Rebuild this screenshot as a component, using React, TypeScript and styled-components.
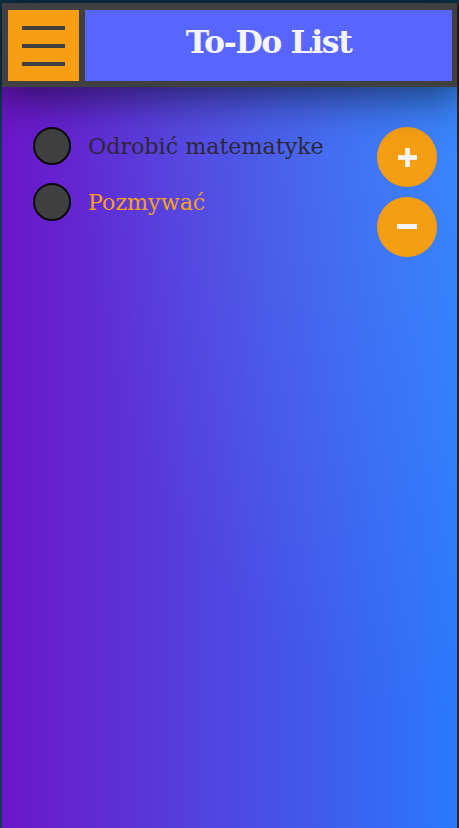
import styled, { createGlobalStyle } from "styled-components";

const Global = createGlobalStyle`
html, body {
  margin: 0;
  padding: 0;
  height: 100%;
}
body {
  background: #0f3a55;
  font-family: "DejaVu Serif", "Liberation Serif", serif;
}
#root {
  height: 100%;
}
`

const Page = styled.div`
  box-sizing: border-box;
  height: 100vh;
  padding: 3px 0 0 2px;
  display: flex;
  flex-direction: column;
`

const Frame = styled.div`
  flex: 1;
  display: flex;
  flex-direction: column;
  border-right: 2px solid #25282c;
`

const Header = styled.header`
  position: relative;
  z-index: 2;
  height: 84px;
  box-sizing: border-box;
  padding: 7px 5px 6px 6px;
  background: #404040;
  display: flex;
  gap: 6px;
  box-shadow: 0 0 45px 8px rgba(0, 0, 0, 0.6);
`

const MenuButton = styled.button`
  width: 71px;
  height: 71px;
  border: none;
  padding: 0;
  background: #f79e13;
  display: flex;
  flex-direction: column;
  align-items: center;
  justify-content: center;
  gap: 14px;
  cursor: pointer;
`

const Bar = styled.span`
  display: block;
  width: 43px;
  height: 4px;
  background: #404040;
`

const Title = styled.h1`
  flex: 1;
  margin: 0;
  padding-bottom: 8px;
  background: #5865ff;
  color: #f4f4fb;
  font-family: "DejaVu Serif", "Liberation Serif", serif;
  font-weight: bold;
  font-size: 31.5px;
  letter-spacing: -1.4px;
  display: flex;
  align-items: center;
  justify-content: center;
`

const Main = styled.main`
  flex: 1;
  display: flex;
  justify-content: space-between;
  padding: 40px 20px 0 31px;
  background:
    radial-gradient(ellipse at 100% 0%, rgba(90, 160, 255, 0.35), rgba(90, 160, 255, 0) 60%),
    linear-gradient(to right, #6c16c9 0%, #5440de 42%, #2a79fc 100%);
`

const List = styled.ul`
  list-style: none;
  margin: 0;
  padding: 0;
  display: flex;
  flex-direction: column;
  gap: 18px;
`

const Item = styled.li`
  display: flex;
  align-items: center;
  gap: 17px;
`

const Check = styled.span`
  width: 34px;
  height: 34px;
  border-radius: 50%;
  background: #404040;
  border: 2px solid #0a0a0a;
`

const Label = styled.span<{ $done?: boolean }>`
  font-size: 22.2px;
  color: ${p => (p.$done ? "#f5a11c" : "#2c2838")};
`

const Actions = styled.div`
  display: flex;
  flex-direction: column;
  gap: 10px;
`

const RoundButton = styled.button`
  width: 60px;
  height: 60px;
  border-radius: 50%;
  border: none;
  background: #f59e12;
  display: flex;
  align-items: center;
  justify-content: center;
  padding: 0;
`

export default function App() {
    const todos = [
        { text: "Odrobić matematyke", done: false },
        { text: "Pozmywać", done: true },
    ];

    return (<>
        <Global />
        <Page>
            <Frame>
                <Header>
                    <MenuButton>
                        <Bar />
                        <Bar />
                        <Bar />
                    </MenuButton>
                    <Title>To-Do List</Title>
                </Header>
                <Main>
                    <List>
                        {todos.map(t => (
                            <Item key={t.text}>
                                <Check />
                                <Label $done={t.done}>{t.text}</Label>
                            </Item>
                        ))}
                    </List>
                    <Actions>
                        <RoundButton>
                            <svg width="19" height="19" viewBox="0 0 20 20">
                                <rect x="7.5" y="0" width="5" height="20" fill="#f5f5f5" />
                                <rect x="0" y="7.5" width="20" height="5" fill="#f5f5f5" />
                            </svg>
                        </RoundButton>
                        <RoundButton>
                            <svg width="20" height="6" viewBox="0 0 20 6">
                                <rect x="0" y="0" width="20" height="5" fill="#f5f5f5" />
                            </svg>
                        </RoundButton>
                    </Actions>
                </Main>
            </Frame>
        </Page>
    </>);
}
